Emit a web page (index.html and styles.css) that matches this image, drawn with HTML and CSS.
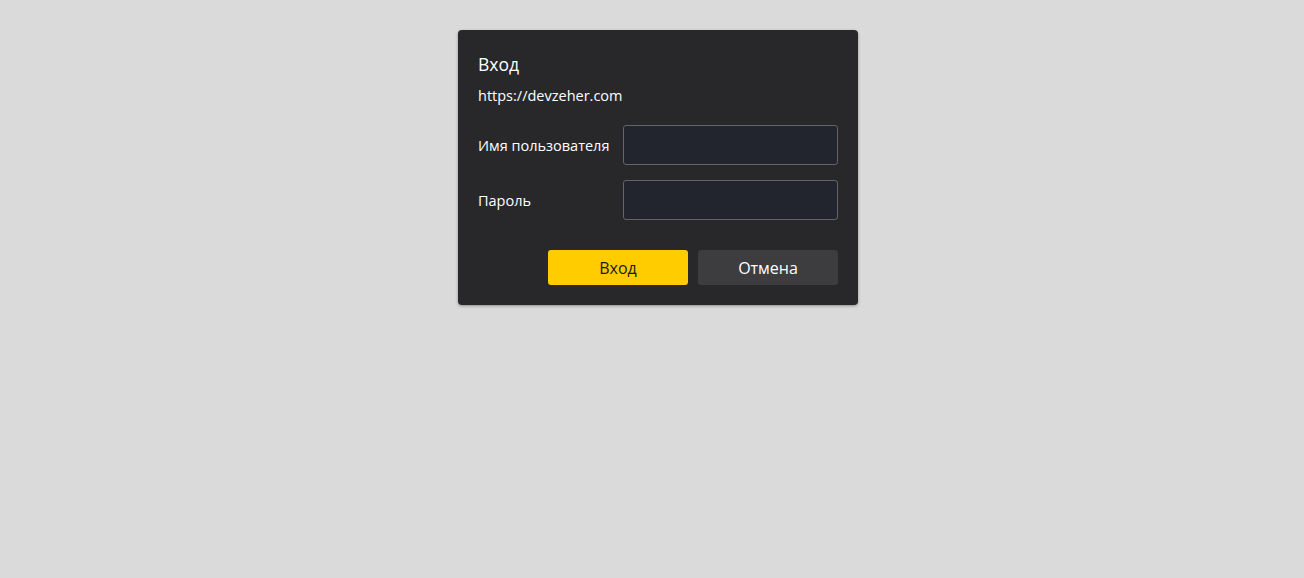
FILE: index.html
```html
<!DOCTYPE html>
<html lang="ru">
<head>
<meta charset="utf-8">
<title>Вход</title>
<link rel="stylesheet" href="styles.css">
</head>
<body>
<div class="dialog">
  <div class="title">Вход</div>
  <div class="origin">https://devzeher.com</div>
  <div class="fields">
    <label class="row">
      <span class="label">Имя пользователя</span>
      <input class="input" type="text">
    </label>
    <label class="row">
      <span class="label">Пароль</span>
      <input class="input" type="password">
    </label>
  </div>
  <div class="actions">
    <button class="btn btn-primary">Вход</button>
    <button class="btn btn-secondary">Отмена</button>
  </div>
</div>
</body>
</html>
```

FILE: styles.css
```css
html, body {
  margin: 0;
  padding: 0;
  height: 100%;
}
body {
  background: #dadada;
  font-family: "Open Sans", "Noto Sans", Arial, sans-serif;
  display: flex;
  justify-content: center;
  align-items: flex-start;
}
.dialog {
  margin-top: 30px;
  margin-left: 12px;
  width: 400px;
  box-sizing: border-box;
  background: #28282a;
  border-radius: 4px;
  box-shadow: 0 1px 3px rgba(0,0,0,0.35);
  padding: 20px;
  color: #ffffff;
}
.title {
  font-size: 17.5px;
  line-height: 22px;
  margin-top: 3px;
}
.origin {
  font-size: 14.5px;
  line-height: 20px;
  margin-top: 11px;
}
.fields {
  margin-top: 19px;
  display: flex;
  flex-direction: column;
  gap: 15px;
}
.row {
  display: flex;
  align-items: center;
  justify-content: space-between;
}
.label {
  font-size: 14.5px;
}
.input {
  width: 215px;
  height: 40px;
  box-sizing: border-box;
  background: #23252e;
  border: 1px solid #646468;
  border-radius: 3px;
  outline: none;
  color: #fff;
  padding: 0 8px;
}
.actions {
  margin-top: 30px;
  display: flex;
  justify-content: flex-end;
  gap: 10px;
}
.btn {
  width: 140px;
  height: 35px;
  border: none;
  border-radius: 3px;
  font-family: inherit;
  font-size: 16px;
  cursor: pointer;
}
.btn-primary {
  background: #ffcc00;
  color: #1a1a1a;
}
.btn-secondary {
  background: #3d3d3f;
  color: #ffffff;
}
```
